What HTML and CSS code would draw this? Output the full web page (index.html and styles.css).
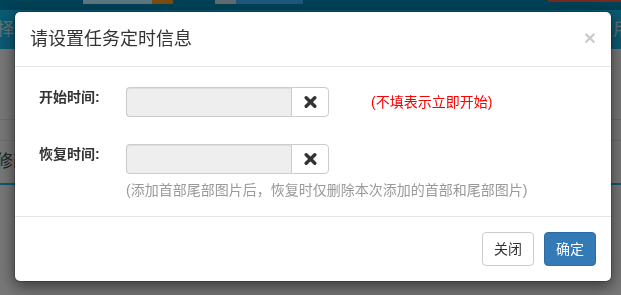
FILE: index.html
```html
<!DOCTYPE html>
<html lang="zh-CN">
<head>
    <meta charset="utf-8">
    <title>任务定时</title>
    <link rel="stylesheet" href="styles.css">
</head>
<body>
<div class="page">
    <div class="topbar">
        <span class="tb-thumb"></span>
        <span class="tb-orange"></span>
        <span class="tb-thumb2"></span>
        <span class="tb-blue"></span>
        <span class="tb-red"></span>
    </div>
    <div class="navrow">
        <span>择名</span>
        <span>用</span>
    </div>
    <div class="list">
        <div class="list-row first"></div>
        <div class="list-row"></div>
        <div class="list-row edit">修改</div>
    </div>
</div>

<div class="backdrop"></div>

<div class="modal">
    <div class="modal-dialog">
        <div class="modal-header">
            <h4 class="modal-title">请设置任务定时信息</h4>
            <button class="close" type="button">&times;</button>
        </div>
        <div class="modal-body">
            <div class="form-row">
                <label class="control-label" for="startTime">开始时间:</label>
                <div class="input-group">
                    <input id="startTime" class="form-control" type="text" readonly>
                    <span class="addon">
                        <svg width="13" height="12" viewBox="0 0 13 12"><path d="M2.2 1.8 L10.8 10.2 M10.8 1.8 L2.2 10.2" stroke="#333" stroke-width="3.4" stroke-linecap="round"/></svg>
                    </span>
                </div>
                <span class="note">(不填表示立即开始)</span>
            </div>
            <div class="form-row second">
                <label class="control-label" for="restoreTime">恢复时间:</label>
                <div class="input-group">
                    <input id="restoreTime" class="form-control" type="text" readonly>
                    <span class="addon">
                        <svg width="13" height="12" viewBox="0 0 13 12"><path d="M2.2 1.8 L10.8 10.2 M10.8 1.8 L2.2 10.2" stroke="#333" stroke-width="3.4" stroke-linecap="round"/></svg>
                    </span>
                </div>
            </div>
            <p class="help-block">(添加首部尾部图片后，恢复时仅删除本次添加的首部和尾部图片)</p>
        </div>
        <div class="modal-footer">
            <button class="btn btn-default" type="button">关闭</button>
            <button class="btn btn-primary" type="button">确定</button>
        </div>
    </div>
</div>
</body>
</html>
```

FILE: styles.css
```css
html, body {
    margin: 0;
    height: 100%;
    overflow: hidden;
}

body {
    font-family: "Liberation Sans", "Noto Sans CJK SC", sans-serif;
    font-size: 14px;
    line-height: 20px;
    color: #333;
    background: #eeeeee;
}

/* page behind the dialog */
.topbar {
    height: 10px;
    background: #0084ae;
    display: flex;
    align-items: flex-start;
}

.tb-thumb {
    margin-left: 83px;
    width: 69px;
    height: 4px;
    background: #bcecff;
}

.tb-orange {
    width: 21px;
    height: 4px;
    background: #f09a1e;
}

.tb-thumb2 {
    margin-left: 42px;
    width: 21px;
    height: 4px;
    background: #c6d6e0;
}

.tb-blue {
    width: 67px;
    height: 4px;
    background: #3cb0ff;
}

.tb-red {
    margin-left: auto;
    width: 73px;
    height: 2px;
    background: #f05444;
}

.navrow {
    height: 39px;
    background: #17b4e8;
    color: #c8e4ee;
    font-size: 17px;
    display: flex;
    justify-content: space-between;
    align-items: center;
}

.navrow span:first-child {
    margin-left: -3px;
}

.navrow span:last-child {
    margin-right: -9px;
}

.list-row {
    height: 20px;
    border-bottom: 1px solid #dadada;
}

.list-row.first {
    height: 70px;
}

.list-row.edit {
    height: 42px;
    line-height: 42px;
    font-size: 17px;
    color: #444;
    border-bottom: 2px solid #17b4e8;
    margin-left: -4px;
}

.backdrop {
    position: fixed;
    inset: 0;
    background: rgba(0, 0, 0, 0.5);
}

/* dialog */
.modal {
    position: fixed;
    inset: 0;
}

.modal-dialog {
    width: 596px;
    margin: 11px 0 0 14px;
    background: #fff;
    border: 1px solid rgba(0, 0, 0, 0.2);
    border-radius: 6px;
    box-shadow: 0 5px 15px rgba(0, 0, 0, 0.5);
    background-clip: padding-box;
}

.modal-header {
    padding: 15px;
    border-bottom: 1px solid #e5e5e5;
    display: flex;
    justify-content: space-between;
    align-items: flex-start;
}

.modal-title {
    margin: 0;
    font-size: 18px;
    font-weight: normal;
    line-height: 24px;
    color: #333;
}

.close {
    padding: 0;
    margin-top: 0;
    border: 0;
    background: none;
    font-family: "Liberation Sans", sans-serif;
    font-size: 21px;
    font-weight: bold;
    line-height: 21px;
    color: #000;
    opacity: 0.2;
    text-shadow: 0 1px 0 #fff;
}

.modal-body {
    padding: 20px 15px 16px 24px;
}

.form-row {
    display: flex;
    align-items: flex-start;
}

.form-row.second {
    margin-top: 27px;
}

.control-label {
    width: 87px;
    font-weight: bold;
    line-height: 20px;
}

.input-group {
    display: flex;
    width: 203px;
    height: 30px;
}

.form-control {
    flex: 1;
    min-width: 0;
    box-sizing: border-box;
    height: 30px;
    margin: 0;
    padding: 5px 10px;
    background: #eee;
    border: 1px solid #ccc;
    border-right: 0;
    border-radius: 4px 0 0 4px;
    box-shadow: inset 0 1px 1px rgba(0, 0, 0, 0.075);
    font-size: 12px;
    outline: none;
}

.addon {
    box-sizing: border-box;
    width: 38px;
    height: 30px;
    display: flex;
    align-items: center;
    justify-content: center;
    background: #fff;
    border: 1px solid #ccc;
    border-radius: 0 4px 4px 0;
}

.note {
    margin-left: 42px;
    line-height: 30px;
    color: #f00;
}

.help-block {
    margin: 6px 0 0 87px;
    line-height: 20px;
    color: #999;
}

.modal-footer {
    padding: 15px;
    border-top: 1px solid #e5e5e5;
    display: flex;
    justify-content: flex-end;
    gap: 10px;
}

.btn {
    padding: 6px 11px;
    font-family: inherit;
    font-size: 14px;
    line-height: 20px;
    border: 1px solid transparent;
    border-radius: 4px;
    cursor: pointer;
}

.btn-default {
    color: #333;
    background: #fff;
    border-color: #ccc;
}

.btn-primary {
    color: #fff;
    background: #337ab7;
    border-color: #2e6da4;
}
```
